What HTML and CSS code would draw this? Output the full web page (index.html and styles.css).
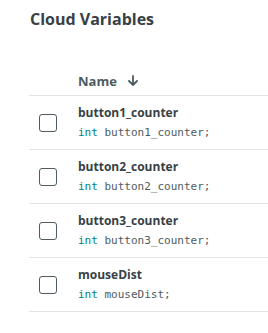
FILE: index.html
```html
<!DOCTYPE html>
<html>
<head>
<meta charset="utf-8">
<link rel="stylesheet" href="styles.css">
</head>
<body>
<div class="page">
  <h1 class="title">Cloud Variables</h1>
  <div class="table">
    <div class="head">
      <span class="col-name">Name</span>
      <svg class="sort" width="10" height="11" viewBox="0 0 10 11"><path d="M5 1v9M1 6l4 4 4-4" fill="none" stroke="#4e5b61" stroke-width="1.8" stroke-linecap="round" stroke-linejoin="round"/></svg>
    </div>
    <div class="row">
      <span class="check"></span>
      <div class="cell">
        <div class="name">button1_counter</div>
        <div class="code"><span class="kw">int</span> button1_counter;</div>
      </div>
    </div>
    <div class="row">
      <span class="check"></span>
      <div class="cell">
        <div class="name">button2_counter</div>
        <div class="code"><span class="kw">int</span> button2_counter;</div>
      </div>
    </div>
    <div class="row">
      <span class="check"></span>
      <div class="cell">
        <div class="name">button3_counter</div>
        <div class="code"><span class="kw">int</span> button3_counter;</div>
      </div>
    </div>
    <div class="row">
      <span class="check"></span>
      <div class="cell">
        <div class="name">mouseDist</div>
        <div class="code"><span class="kw">int</span> mouseDist;</div>
      </div>
    </div>
  </div>
</div>
</body>
</html>
```

FILE: styles.css
```css
html, body {
  margin: 0;
  background: #fff;
}
body {
  font-family: "Open Sans", "Liberation Sans", sans-serif;
  color: #374146;
}
.page {
  padding: 0 0 0 29px;
}
.title {
  margin: 0;
  padding: 8px 0 0 1px;
  font-size: 16px;
  line-height: 22px;
  font-weight: 700;
  color: #374146;
}
.table {
  margin-top: 36px;
}
.head {
  display: flex;
  align-items: center;
  gap: 11px;
  padding: 0 0 0 49px;
  height: 30px;
  border-bottom: 1px solid #e2e4e5;
  box-sizing: border-box;
}
.col-name {
  font-size: 13px;
  font-weight: 700;
  color: #4e5b61;
}
.sort {
  display: block;
}
.row {
  display: flex;
  align-items: center;
  height: 54px;
  box-sizing: border-box;
  border-bottom: 1px solid #e2e4e5;
}
.check {
  width: 18px;
  height: 18px;
  box-sizing: border-box;
  border: 1.5px solid #4e5b61;
  border-radius: 3px;
  margin: 0 21px 0 10px;
  flex: none;
}
.cell {
  display: flex;
  flex-direction: column;
  gap: 4px;
}
.name {
  font-size: 12px;
  line-height: 16px;
  font-weight: 700;
  color: #374146;
}
.code {
  font-family: "DejaVu Sans Mono", "Liberation Mono", monospace;
  font-size: 11px;
  line-height: 16px;
  color: #4e5b61;
}
.kw {
  color: #008184;
}
```
